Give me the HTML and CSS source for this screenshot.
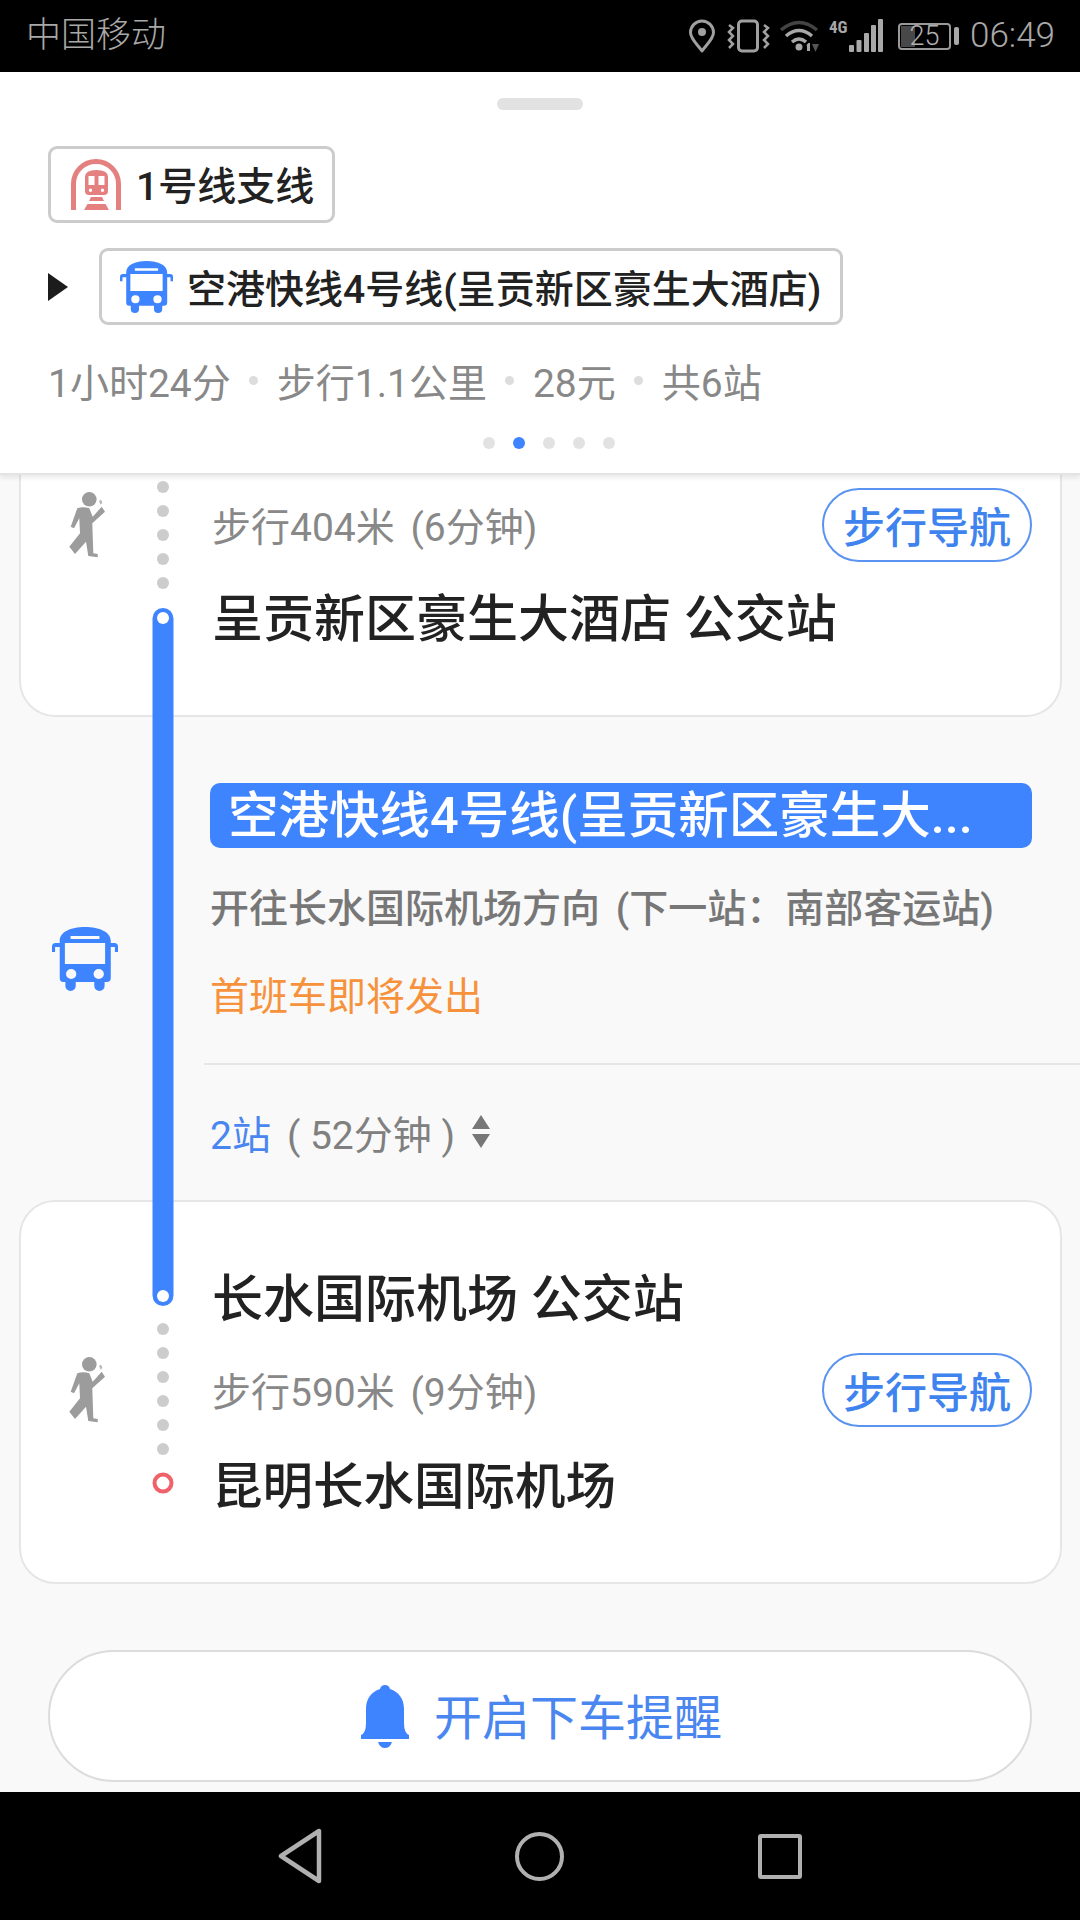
FILE: index.html
```html
<!DOCTYPE html>
<html lang="zh-CN">
<head>
<meta charset="utf-8">
<title>路线详情</title>
<link rel="stylesheet" href="styles.css">
</head>
<body>
<svg class="defs" width="0" height="0" aria-hidden="true">
  <defs>
    <symbol id="bus" viewBox="0 0 64 64" preserveAspectRatio="none">
      <path fill-rule="evenodd" d="M7.500 14C7.500 5 18 0 32 0S57 5 57 14V16H60.500Q64 16 64 19.500V25H61V20H57V51Q57 55 53 55H51V59A4.500 4.500 0 0 1 41 59V55H23V59A4.500 4.500 0 0 1 13 59V55H11Q7.500 55 7.500 51V20H3V25H0V19.500Q0 16 3.500 16H7.500ZM18 9V12H46V9ZM12.500 16V37H51.500V16ZM18.600 42A5 5 0 1 0 18.600 52A5 5 0 1 0 18.600 42ZM45.300 42A5 5 0 1 0 45.300 52A5 5 0 1 0 45.300 42Z"/>
    </symbol>
    <symbol id="walker" viewBox="0 0 40 70">
      <circle cx="22.300" cy="9.300" r="7.300"/>
      <path d="M10.300 18.300L3.700 36.700L7 38.300L12.300 28.300L13 43.300L2.300 56.700L8 64L19 51.700L21.300 66L30.700 67.300V64L26.300 63.300L25.300 33.300L38 21.700L34.700 16.700L25.700 26.700L22.300 18.300Q16 16 10.300 18.300Z"/>
      <path d="M32 11L34 9.500L35.500 13L33.500 14.500Z" opacity=".7"/>
    </symbol>
  </defs>
</svg>

<div class="screen">
  <div class="status">
    <span class="carrier">中国移动</span>
    <div class="status-icons">
      <svg class="ic-loc" viewBox="0 0 26 34"><path fill="none" stroke="#a0a0a0" stroke-width="3" stroke-linejoin="round" d="M13 2A11.500 11.500 0 0 0 1.500 13.500C1.500 20 9 26 13 32C17 26 24.500 20 24.500 13.500A11.500 11.500 0 0 0 13 2Z"/><circle cx="13" cy="13" r="4" fill="#a0a0a0"/></svg>
      <svg class="ic-vib" viewBox="0 0 43 34"><rect x="11.500" y="2" width="19" height="30" rx="3.500" fill="none" stroke="#a0a0a0" stroke-width="3"/><path fill="none" stroke="#a0a0a0" stroke-width="2.500" d="M2 6L6 9L2 13L6 17L2 21L6 25L2 29M37 6L41 9L37 13L41 17L37 21L41 25L37 29"/></svg>
      <svg class="ic-wifi" viewBox="0 0 39 34"><path fill="none" stroke="#444" stroke-width="3.500" d="M1 11Q19 -4 37 11"/><path fill="none" stroke="#a8a8a8" stroke-width="3.500" d="M6 17Q19 6 32 17M12 23Q19 17 26 23"/><circle cx="19" cy="28" r="3.500" fill="#a8a8a8"/><path fill="#a8a8a8" d="M27 32H30V24H28.500L26.500 26L27 27Z"/><path fill="#555" d="M32 25H39L35.500 33Z"/></svg>
      <svg class="ic-sig" viewBox="0 -3 54 40"><text class="g4" x="0" y="14">4G</text><g fill="#a8a8a8"><rect x="20" y="26" width="5" height="7" rx="1"/><rect x="27.500" y="21" width="5" height="12" rx="1"/><rect x="35" y="14" width="5" height="19" rx="1"/><rect x="42" y="6" width="5" height="27" rx="1"/><rect x="49" y="0" width="5" height="33" rx="1"/></g></svg>
      <div class="battery"><div class="batt-body"><span class="batt-fill"></span><span class="batt-num">25</span></div><span class="batt-nub"></span></div>
      <span class="time">06:49</span>
    </div>
  </div>

  <header class="summary">
    <span class="handle"></span>
    <div class="chip chip-metro">
      <svg class="metro" viewBox="0 0 50 51">
        <path fill="none" stroke="#e58080" stroke-width="5" d="M2.500 51V25A22.500 22.500 0 0 1 47.500 25V51"/>
        <path fill="#e58080" fill-rule="evenodd" d="M14 18Q14 11 25.500 11T37 18V32Q37 36 33 36H18Q14 36 14 32ZM17.500 17V26H23.500V17ZM27.500 17V26H33.500V17ZM19.500 29.500A1.700 1.700 0 1 0 19.500 32.900A1.700 1.700 0 1 0 19.500 29.500ZM31.500 29.500A1.700 1.700 0 1 0 31.500 32.900A1.700 1.700 0 1 0 31.500 29.500ZM20 38H31L33 42H18ZM16.500 45H34.500L38 51H13Z"/>
      </svg>
      <span class="chip-label">1号线支线</span>
    </div>
    <div class="bus-row">
      <span class="play"></span>
      <div class="chip chip-bus">
        <svg class="bus-small"><use href="#bus"/></svg>
        <span class="chip-label">空港快线4号线(呈贡新区豪生大酒店)</span>
      </div>
    </div>
    <div class="meta">
      <span>1小时24分</span><i></i><span>步行1.1公里</span><i></i><span>28元</span><i></i><span>共6站</span>
    </div>
    <div class="pager"><i></i><i class="on"></i><i></i><i></i><i></i></div>
  </header>

  <main class="route">
    <svg class="timeline" width="26" height="1020" viewBox="0 0 26 1020">
      <g fill="#ccc">
        <circle cx="13" cy="12" r="6"/><circle cx="13" cy="36" r="6"/><circle cx="13" cy="60" r="6"/><circle cx="13" cy="84" r="6"/><circle cx="13" cy="108" r="6"/>
        <circle cx="13" cy="854" r="6"/><circle cx="13" cy="878" r="6"/><circle cx="13" cy="902" r="6"/><circle cx="13" cy="926" r="6"/><circle cx="13" cy="950" r="6"/><circle cx="13" cy="974" r="6"/>
      </g>
      <rect x="2.500" y="133" width="21" height="698" rx="10.500" fill="#3f84ff"/>
      <circle cx="13" cy="143" r="6" fill="#fff"/>
      <circle cx="13" cy="821" r="6" fill="#fff"/>
      <circle cx="13" cy="1008" r="8.500" fill="#fff" stroke="#f0626a" stroke-width="4"/>
    </svg>

    <section class="card card-first">
      <div class="step">
        <svg class="walker"><use href="#walker"/></svg>
        <span class="step-text">步行404米 (6分钟)</span>
        <span class="nav-btn">步行导航</span>
      </div>
      <h2 class="stop">呈贡新区豪生大酒店 公交站</h2>
    </section>

    <section class="line">
      <svg class="bus-big"><use href="#bus"/></svg>
      <div class="line-body">
        <div class="line-name">空港快线4号线(呈贡新区豪生大...</div>
        <p class="direction">开往长水国际机场方向 (下一站：南部客运站)</p>
        <p class="first-bus">首班车即将发出</p>
        <hr class="divider">
        <div class="stops">
          <span class="stops-count">2站</span>
          <span class="stops-time">( 52分钟 )</span>
          <svg class="sort" viewBox="0 0 20 34"><path fill="#777" d="M10 0L19 14H1ZM1 19H19L10 33Z"/></svg>
        </div>
      </div>
    </section>

    <section class="card card-last">
      <h2 class="stop">长水国际机场 公交站</h2>
      <div class="step step-mid">
        <svg class="walker"><use href="#walker"/></svg>
        <span class="step-text">步行590米 (9分钟)</span>
        <span class="nav-btn">步行导航</span>
      </div>
      <h2 class="stop stop-end">昆明长水国际机场</h2>
    </section>

    <div class="remind">
      <svg class="bell" viewBox="0 0 48 63"><path fill="#3f84ff" d="M24 0Q28 0 29 4C38 7 43 14 43 24V38Q43 48 48 50V54H0V50Q5 48 5 38V24C5 14 10 7 19 4Q20 0 24 0ZM17 57H31Q29 63 24 63T17 57Z"/></svg>
      <span class="remind-label">开启下车提醒</span>
    </div>
  </main>

  <nav class="navbar">
    <svg class="nav-back" viewBox="0 0 44 56"><path fill="none" stroke="#b0b0b0" stroke-width="4.500" stroke-linejoin="round" d="M41 3V53L3 28Z"/></svg>
    <span class="nav-home"></span>
    <span class="nav-recent"></span>
  </nav>
</div>
</body>
</html>
```

FILE: styles.css
```css
* { box-sizing: border-box; }
html, body { margin: 0; padding: 0; }
body {
  width: 1080px;
  height: 1920px;
  overflow: hidden;
  font-family: Roboto, "Noto Sans CJK SC", sans-serif;
  background: #000;
}
.defs { position: absolute; }
.screen { width: 1080px; height: 1920px; display: flex; flex-direction: column; overflow: hidden; }

/* status bar */
.status {
  height: 72px;
  flex: none;
  background: #000;
  color: #a8a8a8;
  display: flex;
  align-items: center;
  justify-content: space-between;
  padding: 0 25px 0 26px;
}
.carrier { font-size: 35px; font-weight: 300; line-height: 72px; }
.status-icons { display: flex; align-items: center; gap: 10px; }
.status-icons svg { display: block; height: 34px; }
.ic-loc { width: 26px; margin-right: 2px; }
.ic-vib { width: 43px; }
.ic-wifi { width: 39px; }
.status-icons .ic-sig { width: 54px; height: 40px; }
.g4 { font: 700 17px "Roboto Condensed", Roboto, sans-serif; fill: #a8a8a8; }
.battery { display: flex; align-items: center; gap: 3px; margin-left: 5px; }
.batt-body {
  position: relative;
  width: 53px;
  height: 27px;
  border: 2px solid #999;
  border-radius: 4px;
  display: flex;
  align-items: center;
  justify-content: center;
}
.batt-fill { position: absolute; left: 1px; top: 1px; bottom: 1px; width: 14px; background: #484848; }
.batt-num { position: relative; font-size: 27px; font-weight: 300; line-height: 23px; color: #b0b0b0; }
.batt-nub { width: 5px; height: 18px; border-radius: 2px; background: #a8a8a8; }
.time { font-size: 35px; font-weight: 300; color: #a8a8a8; line-height: 72px; margin-left: 1px; }

/* summary */
.summary {
  position: relative;
  z-index: 2;
  height: 403px;
  flex: none;
  background: #fff;
  border-bottom: 2px solid #e4e4e4;
  box-shadow: 0 3px 5px rgba(0, 0, 0, .08);
  padding: 26px 48px 0;
  display: flex;
  flex-direction: column;
  align-items: flex-start;
}
.handle {
  align-self: center;
  width: 86px;
  height: 12px;
  border-radius: 6px;
  background: #e2e2e2;
}
.chip {
  display: flex;
  align-items: center;
  background: #fff;
  border: 3px solid #ccc;
  border-radius: 9px;
  color: #222;
  font-size: 39px;
  font-weight: 500;
}
.chip-metro { height: 77px; width: 287px; margin-top: 36px; padding-left: 20px; gap: 15px; }
.chip-metro .chip-label { margin-bottom: 4px; }
.metro { width: 50px; height: 51px; display: block; }
.bus-row { display: flex; align-items: center; margin-top: 25px; }
.play {
  width: 0;
  height: 0;
  border-left: 20px solid #1c1c1c;
  border-top: 14px solid transparent;
  border-bottom: 14px solid transparent;
  margin-right: 31px;
}
.chip-bus { height: 77px; width: 744px; padding-left: 18px; gap: 14px; }
.chip-bus .chip-label { margin-bottom: 2px; }
.bus-small { width: 53px; height: 52px; fill: #3f84ff; display: block; }
.meta {
  display: flex;
  align-items: center;
  margin-top: 30px;
  height: 50px;
  font-size: 39px;
  color: #888;
}
.meta i { width: 9px; height: 9px; border-radius: 50%; background: #ddd; margin: 0 18.500px; }
.pager { align-self: center; display: flex; gap: 18px; margin: 32px 0 0 18px; }
.pager i { width: 12px; height: 12px; border-radius: 50%; background: #e2e2e2; }
.pager i.on { background: #3f84ff; }

/* route */
.route {
  position: relative;
  flex: 1;
  background: #f9f9f9;
  display: flex;
  flex-direction: column;
}
.timeline { position: absolute; left: 150px; top: 0; z-index: 1; }
.card {
  background: #fff;
  border: 2px solid #e6e6e6;
  margin: 0 18px 0 19px;
  padding-right: 28px;
  padding-left: 46px;
  border-radius: 36px;
}
.card-first {
  height: 242px;
  padding-top: 13px;
  border-top: 0;
  border-radius: 0 0 36px 36px;
}
.card-last { height: 384px; padding-top: 68px; }
.step { display: flex; align-items: center; height: 74px; }
.step-mid { margin-top: 23px; }
.walker { width: 40px; height: 70px; fill: #9c9c9c; flex: none; display: block; }
.step-text { margin: 0 0 2px 105px; flex: 1; font-size: 39px; word-spacing: 6px; color: #888; }
.nav-btn {
  width: 210px;
  height: 74px;
  padding-bottom: 2px;
  border: 2px solid #5b93f0;
  border-radius: 37px;
  color: #3f84ee;
  font-size: 42px;
  font-weight: 500;
  display: flex;
  align-items: center;
  justify-content: center;
}
.stop {
  margin: 28px 0 0 145px;
  font-size: 51px;
  font-weight: 500;
  line-height: 60px;
  color: #222;
}
.card-last > .stop:first-child { margin-top: 0; }
.card-last > .stop-end { margin: 30px 0 0 145px; font-size: 50.500px; }

.line {
  height: 483px;
  flex: none;
  display: flex;
  align-items: center;
  padding-left: 52px;
}
.bus-big { width: 66px; height: 64px; fill: #3f84ff; flex: none; display: block; }
.line-body { margin-left: 86px; flex: 1; min-width: 0; align-self: flex-start; padding-top: 66px; }
.line-name {
  margin: 0 48px 0 6px;
  height: 65px;
  padding: 0 18px;
  background: #3f84ff;
  border-radius: 10px;
  color: #fff;
  font-size: 50.500px;
  font-weight: 500;
  line-height: 65px;
  white-space: nowrap;
}
.direction, .first-bus { margin: 0 0 0 6px; font-size: 39px; line-height: 50px; }
.direction { margin-top: 36px; color: #777; font-weight: 500; word-spacing: 6px; }
.first-bus { margin-top: 38px; color: #f7923c; }
.divider { border: 0; height: 2px; margin: 41px 0 0; background: #e6e6e6; }
.stops { display: flex; align-items: center; gap: 16px; margin: 42px 0 0 6px; height: 50px; font-size: 39px; }
.stops-count { color: #4a86f0; }
.stops-time { color: #808080; white-space: pre; }
.sort { width: 20px; height: 34px; display: block; }

.remind {
  margin: 66px 48px 0 48px;
  height: 132px;
  padding-left: 3px;
  background: #fff;
  border: 2px solid #dcdcdc;
  border-radius: 66px;
  display: flex;
  align-items: center;
  justify-content: center;
  gap: 25px;
  color: #4a86f0;
  font-size: 48px;
}
.remind-label { margin-bottom: 4px; }
.bell { width: 48px; height: 63px; display: block; }

/* nav bar */
.navbar {
  height: 128px;
  flex: none;
  background: #000;
  display: flex;
  align-items: center;
  padding-left: 278px;
}
.nav-back { width: 44px; height: 56px; display: block; }
.nav-home {
  width: 49px;
  height: 49px;
  margin-left: 193px;
  border: 4.500px solid #b0b0b0;
  border-radius: 50%;
}
.nav-recent {
  width: 44px;
  height: 45px;
  margin-left: 194px;
  border: 4.500px solid #b0b0b0;
  border-radius: 3px;
}
```
